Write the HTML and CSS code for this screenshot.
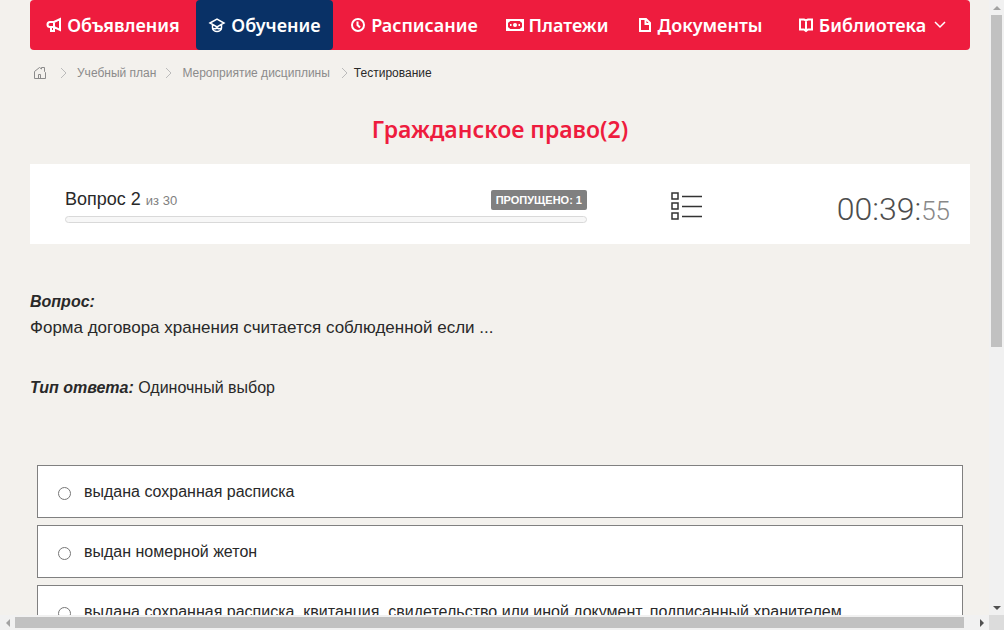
FILE: index.html
```html
<!DOCTYPE html>
<html lang="ru">
<head>
<meta charset="utf-8">
<title>Тестирование</title>
<link rel="stylesheet" href="styles.css">
</head>
<body>
<div class="window">
  <div class="viewport">
    <div class="page">
      <nav class="menu">
        <a class="menu-item" href="#"><svg class="icon" width="16" height="16" viewBox="0 0 16 16"><path d="M14 2v11L8 10H4a2.500 2.500 0 0 1 0-5h4zM8 5v5M5 10v4h3v-4" /></svg>Объявления</a>
        <a class="menu-item active" href="#"><svg class="icon cap" width="18" height="16" viewBox="0 0 18 16"><path d="M2 6l7-4 7 4-7 4zM4.500 8v3a4.500 3.500 0 0 0 9 0V8M5 11.500c2 1 3 0 4-.5 1 .5 2 1.500 4 .5" /></svg>Обучение</a>
        <a class="menu-item" href="#"><svg class="icon" width="16" height="16" viewBox="0 0 16 16"><circle cx="8" cy="8" r="6" /><path d="M7.500 4.500V8l2.500 2.500" /></svg>Расписание</a>
        <a class="menu-item" href="#"><svg class="icon" width="18" height="16" viewBox="0 0 18 16"><rect x="1" y="3" width="16" height="10" /><circle class="solid" cx="9" cy="8" r="2" /><path d="M1 5.500 4 3M17 5.500 14 3M1 10.500 4 13M17 10.500 14 13M4 8h1.500M12.500 8H14" /></svg>Платежи</a>
        <a class="menu-item" href="#"><svg class="icon" width="16" height="16" viewBox="0 0 16 16"><path d="M3 2h6l4 4v8H3zM8.500 2v5H13" /></svg>Документы</a>
        <a class="menu-item" href="#"><svg class="icon" width="16" height="16" viewBox="0 0 16 16"><path d="M2 2.500h4l2 1 2-1h4v10h-4l-2 1.500-2-1.500H2zM8 3v11" /></svg>Библиотека<svg class="chevron" width="12" height="8" viewBox="0 0 12 8"><path d="m1 1 5 5 5-5" /></svg></a>
      </nav>

      <nav class="crumbs" aria-label="Навигация">
        <a class="home" href="#" aria-label="Главная"><svg width="14" height="14" viewBox="0 0 14 14"><path d="M1.500 12.500v-7l5-4 2 1.500V1.500h3v4l1 1v6zM5.500 12.500v-4h2v4" /></svg></a>
        <svg class="sep" width="8" height="12" viewBox="0 0 8 12"><path d="m1 1 5 5-5 5" /></svg>
        <a href="#">Учебный план</a>
        <svg class="sep" width="8" height="12" viewBox="0 0 8 12"><path d="m1 1 5 5-5 5" /></svg>
        <a href="#">Мероприятие дисциплины</a>
        <svg class="sep last" width="8" height="12" viewBox="0 0 8 12"><path d="m1 1 5 5-5 5" /></svg>
        <span class="current">Тестирование</span>
      </nav>

      <h1 class="title">Гражданское право(2)</h1>

      <section class="status">
        <div class="progress">
          <div class="progress-head">
            <div class="number">Вопрос 2 <small>из 30</small></div>
            <span class="skipped">ПРОПУЩЕНО: 1</span>
          </div>
          <div class="track"></div>
        </div>
        <button class="list" type="button" aria-label="Список вопросов"><svg width="32" height="28" viewBox="0 0 32 28"><path d="M1 1h6v6H1zM1 11h6v6H1zM1 21h6v6H1zM11 4.500h20M11 14.500h20M11 24.500h20" /></svg></button>
        <div class="timer">00:39:<small>55</small></div>
      </section>

      <section class="question">
        <p class="label">Вопрос:</p>
        <p class="text">Форма договора хранения считается соблюденной если ...</p>
        <p class="kind"><span class="label">Тип ответа:</span> Одиночный выбор</p>
      </section>

      <form class="answers">
        <label class="answer"><input type="radio" name="answer">выдана сохранная расписка</label>
        <label class="answer"><input type="radio" name="answer">выдан номерной жетон</label>
        <label class="answer"><input type="radio" name="answer">выдана сохранная расписка, квитанция, свидетельство или иной документ, подписанный хранителем</label>
      </form>
    </div>
  </div>
  <div class="bar vertical" aria-hidden="true"><i class="arrow up"></i><i class="thumb"></i><i class="arrow down"></i></div>
  <div class="bar horizontal" aria-hidden="true"><i class="arrow left"></i><i class="thumb"></i><i class="arrow right"></i></div>
  <div class="corner"></div>
</div>
</body>
</html>
```
FILE: styles.css
```css
* { box-sizing: border-box; }
body {
  margin: 0;
  background: #f3f1ed;
  color: #292929;
  font: 16px/26px "Liberation Sans", Arial, sans-serif;
}
a { color: inherit; text-decoration: none; }
p { margin: 0; }
svg { flex: none; fill: none; stroke: currentColor; }
.window {
  display: grid;
  grid-template: minmax(0, 1fr) 15px / minmax(0, 1fr) 15px;
  height: 100vh;
}
.viewport { overflow: hidden; }
.page { min-width: 1000px; padding: 0 30px; }

.menu {
  display: grid;
  grid-template-columns: 168fr 137fr 158fr 127fr 160fr 184fr;
  grid-template-columns: 166fr 137fr 162fr 124fr 161fr 184fr;
  height: 50px;
  padding-right: 6px;
  border-radius: 4px;
  background: #ee1c3e;
  color: #fff;
  font: 600 18px/50px "Noto Sans", sans-serif;
}
.menu-item {
  display: flex;
  align-items: center;
  justify-content: center;
  gap: 5px;
  border-radius: 4px;
  white-space: nowrap;
}
.menu-item.active { background: #093166; }
.icon { stroke-width: 2; }
.icon .solid { fill: currentColor; stroke: none; }
.cap { stroke-width: 1.5; }
.chevron { margin-left: 3px; stroke-width: 1.5; }

.crumbs {
  display: flex;
  align-items: center;
  height: 46px;
  padding-left: 3px;
  gap: 9px;
  color: #8b8b8b;
  font-size: 12px;
}
.home { display: flex; margin-right: 4px; }
.sep { color: #bbb; }
.sep.last { margin-left: 2px; margin-right: -4px; }
.crumbs .current { color: #292929; }

.title {
  margin: 17px 0 18px;
  color: #ee1c3e;
  font: 600 23px/33px "Noto Sans", sans-serif;
  text-align: center;
}

.status {
  display: grid;
  grid-template-columns: 522fr 201fr 162fr;
  align-items: center;
  height: 80px;
  padding: 0 20px 0 35px;
  background: #fff;
}
.progress { padding-top: 3px; }
.progress-head { display: flex; justify-content: space-between; align-items: center; height: 22px; }
.number { font-size: 18px; }
.number small { color: #808080; font-size: 13px; }
.skipped {
  padding: 0 5px;
  border-radius: 2px;
  background: #808080;
  color: #fff;
  font-size: 11px;
  font-weight: bold;
  line-height: 20px;
}
.track {
  height: 7px;
  margin-top: 5px;
  border: 1px solid #d9d9d9;
  border-radius: 4px;
  background: #f7f7f7;
}
.list {
  display: flex;
  justify-self: center;
  margin: 4px 2px 0 0;
  padding: 4px;
  border: 0;
  background: none;
  color: #333;
}
.list svg { stroke-width: 1.5; }
.timer {
  margin-top: 12px;
  color: #4d4d4d;
  font: 300 32px/40px Roboto, sans-serif;
  text-align: right;
}
.timer small { color: #888; font-size: 26px; }

.question { padding: 45px 0 64px; }
.label { font-weight: bold; font-style: italic; }
.text { font-size: 17px; }
.kind { margin-top: 34px; }

.answers { display: grid; gap: 7px; padding: 0 7px; }
.answer {
  display: flex;
  align-items: center;
  height: 53px;
  padding: 0 20px;
  gap: 13px;
  border: 1px solid #808080;
  background: #fff;
}
.answer input { width: 13px; height: 13px; margin: 4px 0 0; }

.bar { display: flex; align-items: center; background: #f1f1f1; }
.vertical { flex-direction: column; }
.horizontal { grid-row: 2; }
.corner { background: #dcdcdc; }
.arrow { display: flex; flex: none; align-items: center; justify-content: center; width: 15px; height: 15px; }
.arrow::before { content: ""; border: 4px solid transparent; }
.up::before { border-top: 0; border-bottom-color: #a3a3a3; }
.down::before { border-bottom: 0; border-top-color: #505050; }
.left::before { border-left: 0; border-right-color: #a3a3a3; }
.right::before { border-right: 0; border-left-color: #505050; }
.thumb { background: #c1c1c1; }
.vertical .thumb { width: 11px; height: 54%; margin: 0 auto auto; }
.horizontal .thumb { width: 96%; height: 11px; margin-right: auto; }
```
